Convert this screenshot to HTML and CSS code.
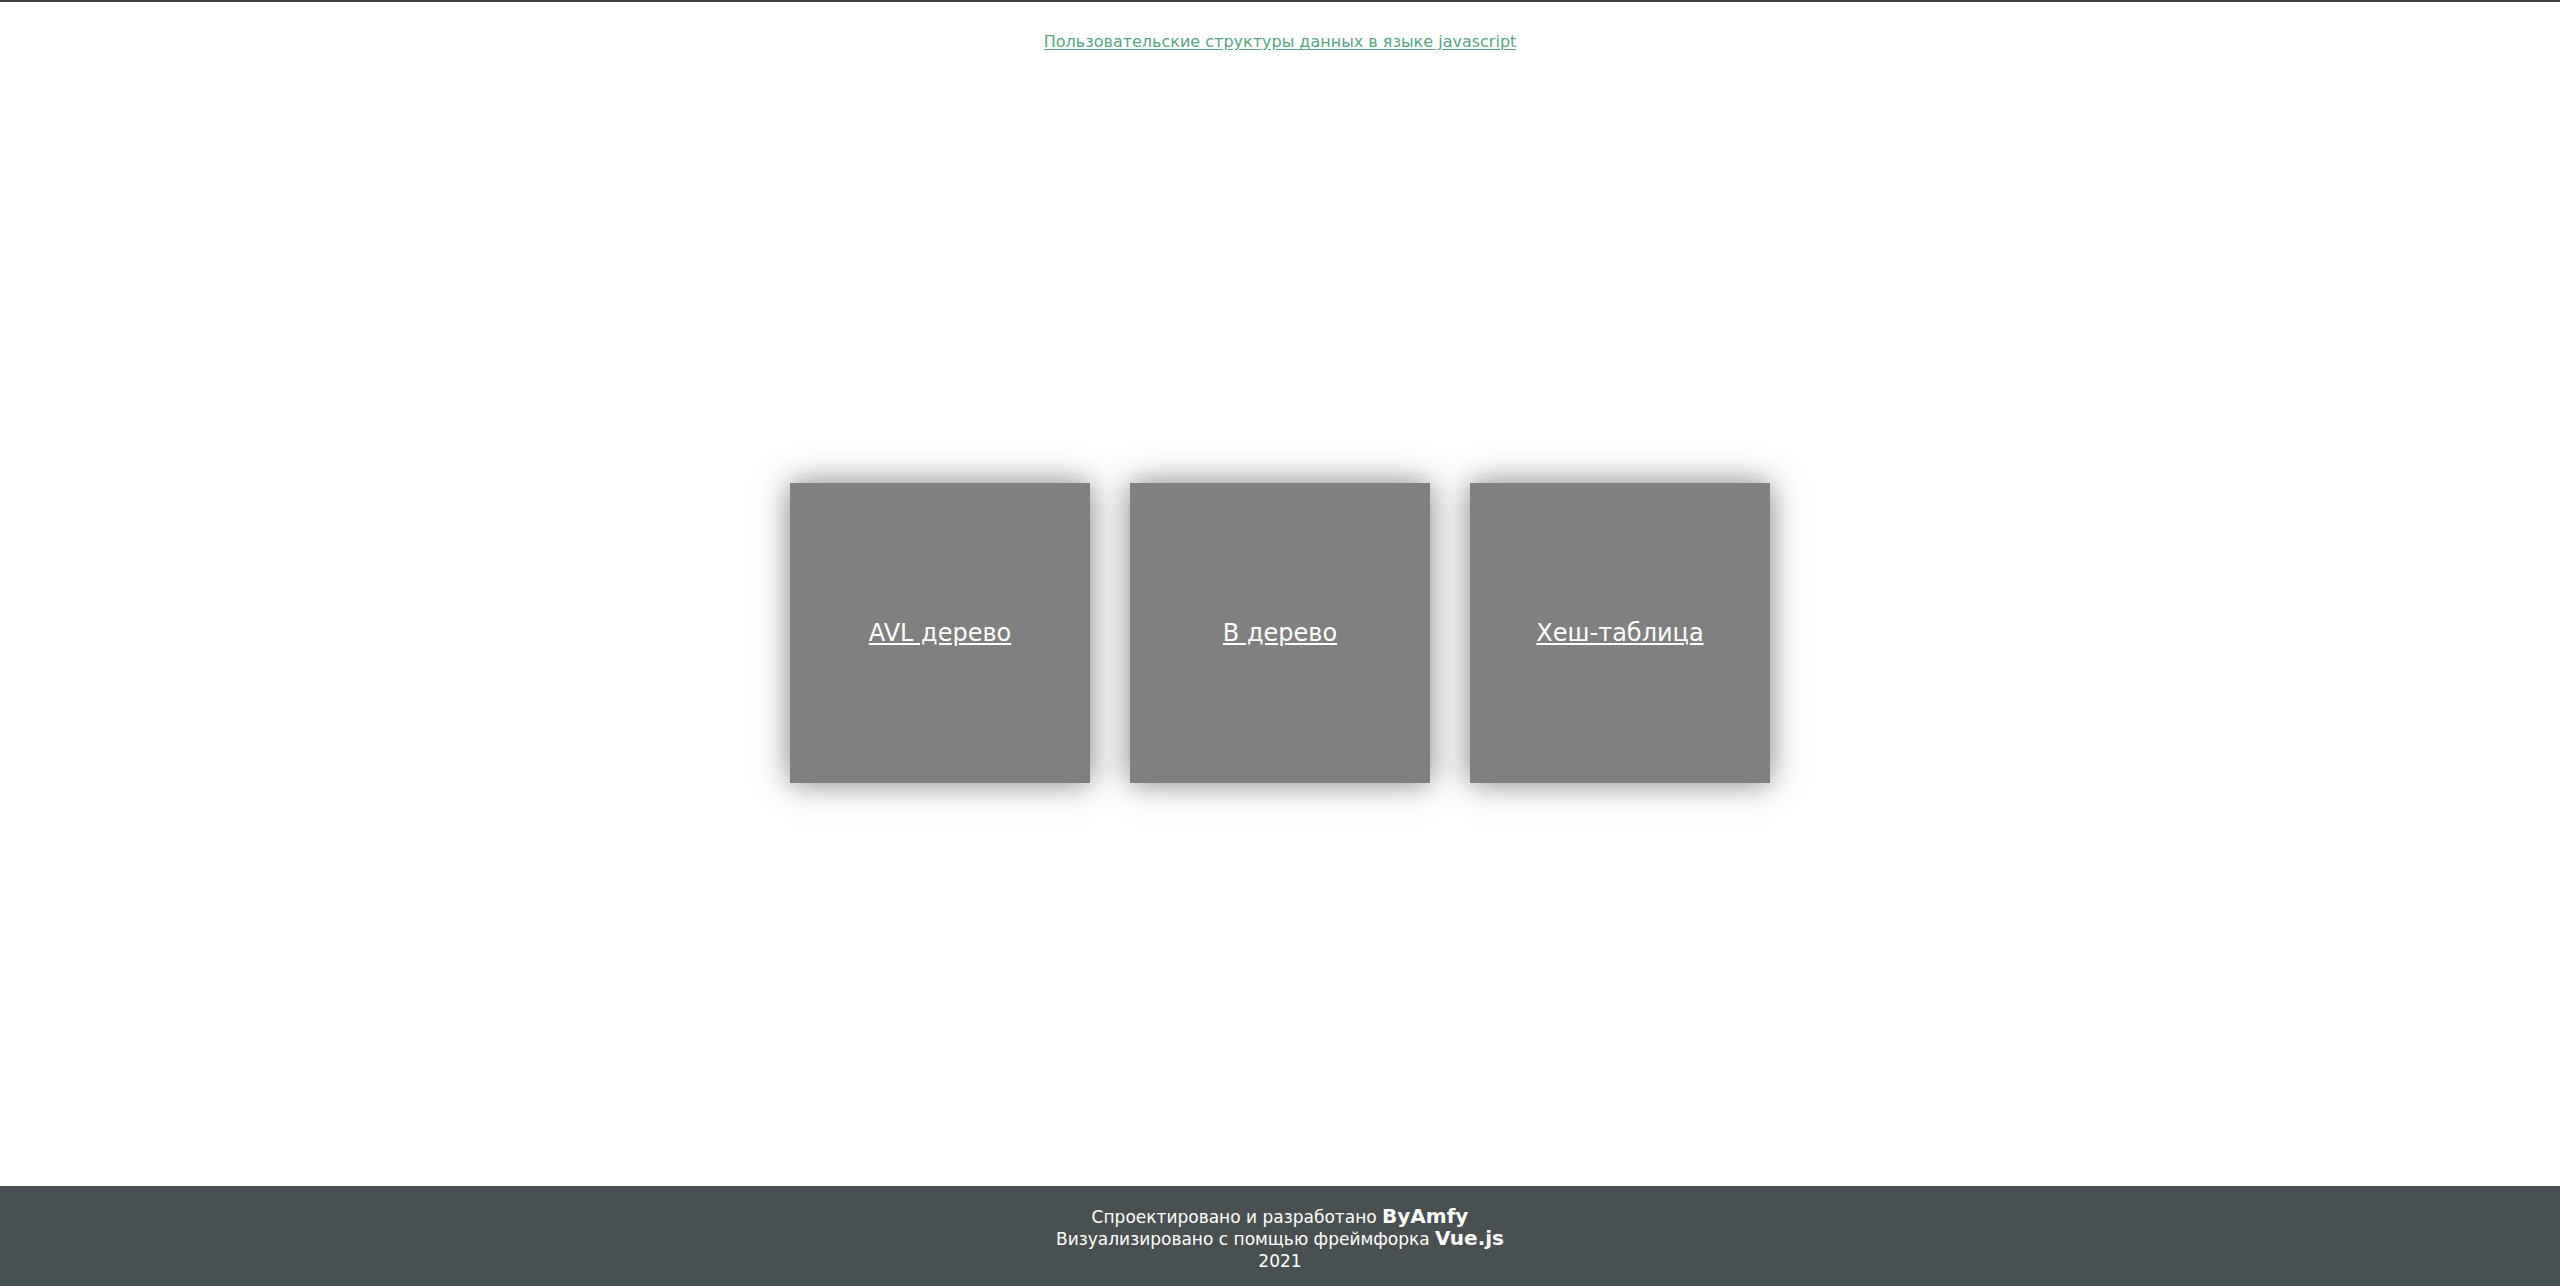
FILE: index.html
```html
<!DOCTYPE html>
<html lang="ru">
<head>
<meta charset="utf-8">
<title>Структуры данных</title>
<link rel="stylesheet" href="styles.css">
</head>
<body>
<header class="header"><a class="header-link" href="#">Пользовательские структуры данных в языке javascript</a></header>
<main class="cards">
<a class="card" href="#avl">AVL дерево</a>
<a class="card" href="#btree">B дерево</a>
<a class="card" href="#hash">Хеш-таблица</a>
</main>
<footer class="footer">
<p class="footer-line">Спроектировано и разработано <strong class="brand">ByAmfy</strong></p>
<p class="footer-line">Визуализировано с помщью фреймфорка <strong class="brand">Vue.js</strong></p>
<p class="footer-line">2021</p>
</footer>
</body>
</html>
```
FILE: styles.css
```css
* {
  box-sizing: border-box;
}

body {
  display: flex;
  flex-direction: column;
  min-height: 100vh;
  margin: 0;
  border-top: 2px solid #444041;
  background: #fff;
  font-family: "DejaVu Sans", sans-serif;
}

.header {
  padding: 30px 16px 28px;
  text-align: center;
  font-size: 16px;
  line-height: 20px;
}

.header-link {
  color: #5aa584;
  text-underline-offset: 2px;
}

.cards {
  display: flex;
  flex: 1;
  flex-wrap: wrap;
  align-items: center;
  justify-content: center;
  gap: 40px;
}

.card {
  display: flex;
  align-items: center;
  justify-content: center;
  width: 300px;
  height: 300px;
  background: #808080;
  box-shadow: 0 0 30px rgba(0, 0, 0, 0.5);
  color: #fff;
  font-size: 24px;
  text-underline-offset: 2px;
}

.footer {
  padding: 20px 16px 14px;
  background: #495052;
  color: #fff;
  text-align: center;
  font-size: 17px;
  line-height: 22px;
}

.footer-line {
  margin: 0;
}

.brand {
  font-size: 20px;
  line-height: 20px;
}
```
